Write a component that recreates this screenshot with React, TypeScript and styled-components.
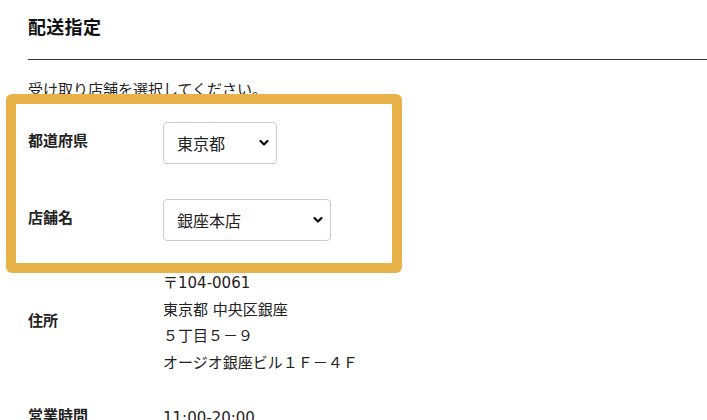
import React from 'react'
import styled, { createGlobalStyle } from 'styled-components'

const GlobalStyle = createGlobalStyle`
  html, body {
    margin: 0;
    padding: 0;
    background: #fff;
  }
  body {
    font-family: "Noto Sans CJK JP", "Noto Sans", sans-serif;
    color: #222;
    overflow: hidden;
  }
`

const Page = styled.main`
  position: relative;
  width: 707px;
  height: 420px;
  padding: 14px 0 0 28px;
  box-sizing: border-box;
  overflow: hidden;
`

const Title = styled.h2`
  margin: 0;
  padding-bottom: 21px;
  border-bottom: 1px solid #333;
  font-size: 18px;
  line-height: 24px;
  font-weight: 700;
  letter-spacing: 0.3px;
  color: #111;
`

const Intro = styled.p`
  margin: 17px 0 0;
  font-size: 15px;
  line-height: 24px;
`

const Section = styled.div<{ $gap: number; $top: number }>`
  display: flex;
  flex-direction: column;
  gap: ${p => p.$gap}px;
  margin-top: ${p => p.$top}px;
`

const Row = styled.div`
  display: grid;
  grid-template-columns: 135px 1fr;
  align-items: center;
`

const Label = styled.div`
  padding-bottom: 6px;
  font-size: 15px;
  font-weight: 700;
  line-height: 24px;
  color: #222;
`

const SelectWrap = styled.div<{ $width: number }>`
  position: relative;
  width: ${p => p.$width}px;
  height: 42px;
`

const Select = styled.select`
  appearance: none;
  -webkit-appearance: none;
  width: 100%;
  height: 100%;
  box-sizing: border-box;
  padding: 0 30px 0 13px;
  border: 1px solid #ccc;
  border-radius: 4px;
  background: #fff;
  font-family: inherit;
  font-size: 16px;
  color: #222;
  outline: none;
`

const Chevron = styled.svg`
  position: absolute;
  right: 8px;
  top: 50%;
  width: 10px;
  height: 7px;
  transform: translateY(-50%);
  pointer-events: none;
`

const Lines = styled.div`
  font-family: "DejaVu Sans", "Noto Sans CJK JP", sans-serif;
  font-size: 15px;
  line-height: 26.5px;
  color: #222;
`

const Highlight = styled.div`
  position: absolute;
  left: 6px;
  top: 94px;
  width: 396px;
  height: 179px;
  box-sizing: border-box;
  border: 10px solid #e8b248;
  border-radius: 6px;
  pointer-events: none;
`

function Dropdown({ width, value }: { width: number; value: string }) {
  return (
    <SelectWrap $width={width}>
      <Select defaultValue={value}>
        <option value={value}>{value}</option>
      </Select>
      <Chevron viewBox="0 0 10 7">
        <polyline points="1.5,1.5 5,5 8.5,1.5" fill="none" stroke="#111" strokeWidth="2.2" strokeLinecap="round" strokeLinejoin="round" />
      </Chevron>
    </SelectWrap>
  )
}

export default function App() {
  return (
    <>
      <GlobalStyle />
      <Page>
        <Title>配送指定</Title>
        <Intro>受け取り店舗を選択してください。</Intro>

        <Section $gap={35} $top={21}>
          <Row>
            <Label>都道府県</Label>
            <Dropdown width={114} value="東京都" />
          </Row>
          <Row>
            <Label>店舗名</Label>
            <Dropdown width={168} value="銀座本店" />
          </Row>
        </Section>

        <Section $gap={27} $top={29}>
          <Row>
            <Label>住所</Label>
            <Lines>
              <div>〒104-0061</div>
              <div>東京都 中央区銀座</div>
              <div>５丁目５－９</div>
              <div>オージオ銀座ビル１Ｆ－４Ｆ</div>
            </Lines>
          </Row>
          <Row>
            <Label>営業時間</Label>
            <Lines>11:00-20:00</Lines>
          </Row>
        </Section>

        <Highlight />
      </Page>
    </>
  )
}
